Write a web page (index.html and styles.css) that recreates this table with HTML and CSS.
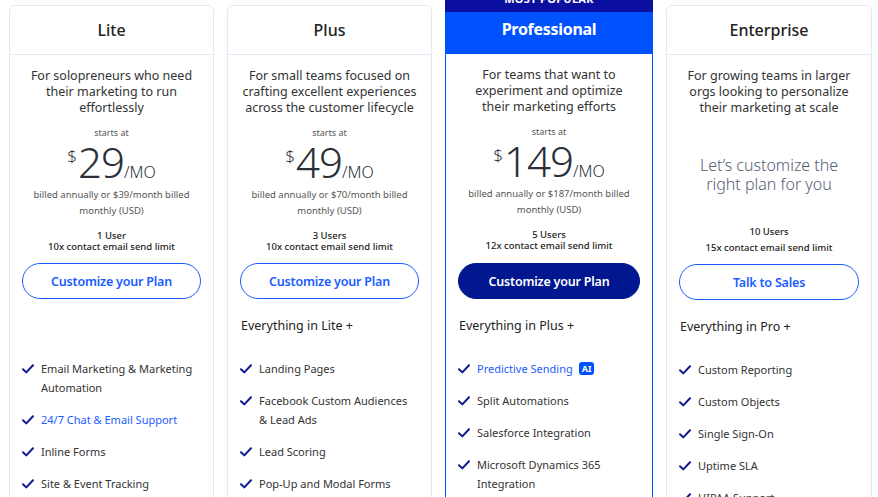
FILE: index.html
```html
<!DOCTYPE html>
<html>
<head>
<meta charset="utf-8">
<link rel="stylesheet" href="styles.css">
</head>
<body>
<div class="plans">
  <div class="card">
    <div class="head"><h2>Lite</h2></div>
    <div class="body">
      <p class="desc">For solopreneurs who need their marketing to run effortlessly</p>
      <div class="starts">starts at</div>
      <div class="price"><span class="cur">$</span><span class="amt">29</span><span class="per">/MO</span></div>
      <p class="billed">billed annually or $39/month billed monthly (USD)</p>
      <div class="limits"><div>1 User</div><div>10x contact email send limit</div></div>
      <a class="btn">Customize your Plan</a>
      <div class="every"></div>
      <ul class="feats">
        <li><svg class="chk" viewBox="0 0 12 10"><path d="M1 5.2 4.3 8.4 11 1.3"/></svg><span>Email Marketing &amp; Marketing Automation</span></li>
        <li><svg class="chk" viewBox="0 0 12 10"><path d="M1 5.2 4.3 8.4 11 1.3"/></svg><span class="link">24/7 Chat &amp; Email Support</span></li>
        <li><svg class="chk" viewBox="0 0 12 10"><path d="M1 5.2 4.3 8.4 11 1.3"/></svg><span>Inline Forms</span></li>
        <li><svg class="chk" viewBox="0 0 12 10"><path d="M1 5.2 4.3 8.4 11 1.3"/></svg><span>Site &amp; Event Tracking</span></li>
      </ul>
    </div>
  </div>
  <div class="card">
    <div class="head"><h2>Plus</h2></div>
    <div class="body">
      <p class="desc">For small teams focused on crafting excellent experiences across the customer lifecycle</p>
      <div class="starts">starts at</div>
      <div class="price"><span class="cur">$</span><span class="amt">49</span><span class="per">/MO</span></div>
      <p class="billed">billed annually or $70/month billed monthly (USD)</p>
      <div class="limits"><div>3 Users</div><div>10x contact email send limit</div></div>
      <a class="btn">Customize your Plan</a>
      <div class="every">Everything in Lite +</div>
      <ul class="feats">
        <li><svg class="chk" viewBox="0 0 12 10"><path d="M1 5.2 4.3 8.4 11 1.3"/></svg><span>Landing Pages</span></li>
        <li><svg class="chk" viewBox="0 0 12 10"><path d="M1 5.2 4.3 8.4 11 1.3"/></svg><span>Facebook Custom Audiences &amp; Lead Ads</span></li>
        <li><svg class="chk" viewBox="0 0 12 10"><path d="M1 5.2 4.3 8.4 11 1.3"/></svg><span>Lead Scoring</span></li>
        <li><svg class="chk" viewBox="0 0 12 10"><path d="M1 5.2 4.3 8.4 11 1.3"/></svg><span>Pop-Up and Modal Forms</span></li>
      </ul>
    </div>
  </div>
  <div class="card pro">
    <div class="band">MOST POPULAR</div>
    <div class="head"><h2>Professional</h2></div>
    <div class="body">
      <p class="desc">For teams that want to experiment and optimize their marketing efforts</p>
      <div class="starts">starts at</div>
      <div class="price"><span class="cur">$</span><span class="amt">149</span><span class="per">/MO</span></div>
      <p class="billed">billed annually or $187/month billed monthly (USD)</p>
      <div class="limits"><div>5 Users</div><div>12x contact email send limit</div></div>
      <a class="btn solid">Customize your Plan</a>
      <div class="every">Everything in Plus +</div>
      <ul class="feats">
        <li><svg class="chk" viewBox="0 0 12 10"><path d="M1 5.2 4.3 8.4 11 1.3"/></svg><span class="link">Predictive Sending</span><span class="ai">AI</span></li>
        <li><svg class="chk" viewBox="0 0 12 10"><path d="M1 5.2 4.3 8.4 11 1.3"/></svg><span>Split Automations</span></li>
        <li><svg class="chk" viewBox="0 0 12 10"><path d="M1 5.2 4.3 8.4 11 1.3"/></svg><span>Salesforce Integration</span></li>
        <li><svg class="chk" viewBox="0 0 12 10"><path d="M1 5.2 4.3 8.4 11 1.3"/></svg><span>Microsoft Dynamics 365 Integration</span></li>
      </ul>
    </div>
  </div>
  <div class="card">
    <div class="head"><h2>Enterprise</h2></div>
    <div class="body">
      <p class="desc">For growing teams in larger orgs looking to personalize their marketing at scale</p>
      <p class="custom">Let’s customize the right plan for you</p>
      <div class="limits ent"><div>10 Users</div><div>15x contact email send limit</div></div>
      <a class="btn">Talk to Sales</a>
      <div class="every">Everything in Pro +</div>
      <ul class="feats">
        <li><svg class="chk" viewBox="0 0 12 10"><path d="M1 5.2 4.3 8.4 11 1.3"/></svg><span>Custom Reporting</span></li>
        <li><svg class="chk" viewBox="0 0 12 10"><path d="M1 5.2 4.3 8.4 11 1.3"/></svg><span>Custom Objects</span></li>
        <li><svg class="chk" viewBox="0 0 12 10"><path d="M1 5.2 4.3 8.4 11 1.3"/></svg><span>Single Sign-On</span></li>
        <li><svg class="chk" viewBox="0 0 12 10"><path d="M1 5.2 4.3 8.4 11 1.3"/></svg><span>Uptime SLA</span></li>
        <li><svg class="chk" viewBox="0 0 12 10"><path d="M1 5.2 4.3 8.4 11 1.3"/></svg><span>HIPAA Support</span></li>
      </ul>
    </div>
  </div>
</div>
</body>
</html>
```
FILE: styles.css
```css
html, body {
  margin: 0;
  padding: 0;
  background: #fff;
  overflow: hidden;
}
body {
  font-family: "Noto Sans", "Open Sans", sans-serif;
  color: #222;
}
.plans {
  display: grid;
  grid-template-columns: 205px 205px 208px 206px;
  column-gap: 13px;
  padding: 5px 0 0 9px;
  align-items: start;
}
.card {
  border: 1px solid #e2e9f7;
  border-radius: 6px;
  background: #fff;
  min-height: 560px;
}
.head {
  height: 49px;
  border-bottom: 1px solid #e2e9f7;
  display: flex;
  align-items: flex-start;
  justify-content: center;
  box-sizing: border-box;
  padding-top: 13px;
}
.head h2 {
  margin: 0;
  font-size: 16px;
  line-height: 22px;
  font-weight: 500;
  color: #222;
}
.body {
  padding: 13px 12px 0;
  display: flex;
  flex-direction: column;
}
.desc {
  margin: 0 2px;
  text-align: center;
  font-size: 12.5px;
  line-height: 16px;
  color: #333;
  min-height: 48px;
}
.starts {
  margin-top: 11px;
  text-align: center;
  font-size: 9px;
  color: #555;
  line-height: 12px;
}
.price {
  display: flex;
  justify-content: center;
  align-items: baseline;
  height: 44px;
  color: #2a2f3a;
  margin-top: 1px;
}
.cur {
  font-size: 17px;
  font-weight: 300;
  align-self: flex-start;
  margin-top: 4px;
  margin-right: 1px;
}
.amt {
  font-size: 42px;
  font-weight: 300;
  line-height: 44px;
  letter-spacing: -1px;
}
.per {
  font-size: 16px;
  font-weight: 300;
}
.billed {
  margin: 3px 0 0;
  text-align: center;
  font-size: 9.5px;
  line-height: 16px;
  color: #555;
}
.limits {
  margin-top: 11px;
  text-align: center;
  font-size: 9.5px;
  line-height: 11px;
  font-weight: 500;
  color: #222;
}
.custom {
  margin: 40px 18px 0;
  text-align: center;
  font-size: 16px;
  line-height: 19px;
  font-weight: 300;
  color: #566075;
  height: 38px;
}
.limits.ent {
  line-height: 16px;
  margin-top: 30px;
  margin-bottom: -3px;
}
.btn {
  display: flex;
  align-items: center;
  justify-content: center;
  height: 34px;
  margin-top: 11px;
  border: 1px solid #1a5cff;
  border-radius: 18px;
  color: #1a5cff;
  font-size: 12.5px;
  font-weight: 600;
  letter-spacing: -0.2px;
  cursor: pointer;
}
.btn.solid {
  background: #00178f;
  border-color: #00178f;
  color: #fff;
}
.every {
  margin-top: 18px;
  height: 18px;
  font-size: 12.5px;
  line-height: 18px;
  color: #222;
  padding-left: 1px;
}
.feats {
  list-style: none;
  margin: 24px 0 0;
  padding: 0 5px 0 0;
  display: flex;
  flex-direction: column;
  gap: 13px;
}
.feats li {
  display: flex;
  align-items: flex-start;
  font-size: 11px;
  line-height: 19px;
  color: #333;
}
.chk {
  width: 12px;
  height: 10px;
  flex: none;
  margin: 5px 7px 0 0;
  fill: none;
  stroke: #0d1a8f;
  stroke-width: 2;
  stroke-linecap: round;
  stroke-linejoin: round;
}
.link { color: #1a5cff; }
.ai {
  display: inline-flex;
  align-items: center;
  justify-content: center;
  margin: 3px 0 0 6px;
  height: 13px;
  padding: 0 3px;
  border-radius: 3px;
  background: #0052ff;
  color: #fff;
  font-size: 9px;
  font-weight: 700;
  line-height: 13px;
}
.pro {
  border-color: #0052ff;
  border-radius: 0;
  margin-top: -13px;
}
.band {
  height: 20px;
  background: #0a0fa0;
  color: #fff;
  font-size: 11px;
  font-weight: 700;
  text-align: center;
  line-height: 14px;
  letter-spacing: 0.3px;
  margin: -1px -1px 0;
}
.pro .head {
  background: #0052ff;
  border-bottom-color: #0052ff;
  height: 42px;
  padding-top: 6px;
}
.pro .head h2 {
  color: #fff;
  font-weight: 700;
  letter-spacing: -0.3px;
}
.pro .body {
  padding-top: 13px;
}
.pro .btn {
  margin-top: 12px;
}
```
